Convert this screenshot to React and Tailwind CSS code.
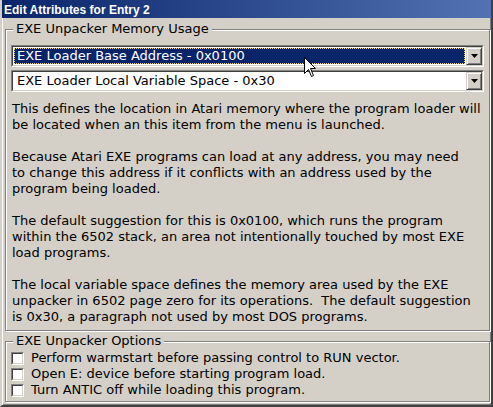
import React from "react";

const body = { fontFamily: '"DejaVu Sans", Verdana, sans-serif' };

const Sunken = ({ className = "", children }) => (
  <div className={`border border-t-[#808080] border-l-[#808080] border-r-white border-b-white ${className}`}>
    <div className="h-full border border-t-[#404040] border-l-[#404040] border-r-[#d4d0c8] border-b-[#d4d0c8] bg-white">
      {children}
    </div>
  </div>
);

const ArrowButton = () => (
  <div className="w-[16px] h-full flex items-center justify-center border border-t-[#d4d0c8] border-l-[#d4d0c8] border-r-[#404040] border-b-[#404040] bg-[#d4d0c8] shadow-[inset_1px_1px_0_#fff,inset_-1px_-1px_0_#808080]">
    <svg width="7" height="4" viewBox="0 0 7 4">
      <path d="M0 0h7L3.5 4z" fill="#000" />
    </svg>
  </div>
);

const Combo = ({ label, selected }) => (
  <Sunken className="h-[22px]">
    <div className="flex h-full">
      <div className="flex-1 p-[1px] min-w-0">
        <div
          className={`h-full flex items-center pl-[2px] text-[13px] leading-4 whitespace-nowrap ${
            selected
              ? "bg-[#0a246a] text-white border border-dotted border-[#e6d48a]"
              : "text-black border border-transparent"
          }`}
        >
          {label}
        </div>
      </div>
      <ArrowButton />
    </div>
  </Sunken>
);

const Group = ({ title, className = "", children }) => (
  <div className={`relative border border-[#808080] shadow-[inset_1px_1px_0_#fff,1px_1px_0_#fff] ${className}`}>
    <span className="absolute -top-[9px] left-[7px] px-[3px] bg-[#d4d0c8] text-[13px] leading-4 text-black">
      {title}
    </span>
    {children}
  </div>
);

const Check = ({ label }) => (
  <div className="flex items-center h-4">
    <Sunken className="w-[13px] h-[13px]" />
    <span className="ml-[7px] text-[13px] leading-4 text-black whitespace-nowrap">{label}</span>
  </div>
);

const paragraphs = [
  [
    "This defines the location in Atari memory where the program loader will",
    "be located when an this item from the menu is launched.",
  ],
  [
    "Because Atari EXE programs can load at any address, you may need",
    "to change this address if it conflicts with an address used by the",
    "program being loaded.",
  ],
  [
    "The default suggestion for this is 0x0100, which runs the program",
    "within the 6502 stack, an area not intentionally touched by most EXE",
    "load programs.",
  ],
  [
    "The local variable space defines the memory area used by the EXE",
    "unpacker in 6502 page zero for its operations.  The default suggestion",
    "is 0x30, a paragraph not used by most DOS programs.",
  ],
];

export default function App() {
  return (
    <div
      className="relative w-[493px] h-[407px] overflow-hidden bg-[#d4d0c8] border-l-2 border-r-2 border-b-2 border-l-[#d4d0c8] border-r-[#404040] border-b-[#404040] shadow-[inset_1px_0_0_#fff,inset_-1px_-1px_0_#808080]"
      style={body}
    >
      {/* title bar */}
      <div className="h-[18px] flex items-center pl-[2px] pt-[1px] bg-gradient-to-r from-[#0a246a] to-[#5272b2]">
        <span
          className="text-white font-bold text-[12px] leading-4"
          style={{ fontFamily: '"Liberation Sans", Arial, sans-serif' }}
        >
          Edit Attributes for Entry 2
        </span>
      </div>

      <div className="ml-[3px] mr-[1px]">
        <Group title="EXE Unpacker Memory Usage" className="mt-[11px] pt-[15px] px-[5px] pb-[5px]">
          <div className="flex flex-col gap-[3px]">
            <Combo label="EXE Loader Base Address - 0x0100" selected />
            <Combo label="EXE Loader Local Variable Space - 0x30" />
          </div>
          <div className="mt-[9px] pl-[1px] flex flex-col gap-4 text-[13px] leading-4 text-black">
            {paragraphs.map((lines, i) => (
              <p key={i}>
                {lines.map((l, j) => (
                  <span key={j} className="block whitespace-pre">
                    {l}
                  </span>
                ))}
              </p>
            ))}
          </div>
        </Group>

        <Group title="EXE Unpacker Options" className="mt-[10px] pt-[8px] px-[5px] pb-[3px]">
          <Check label="Perform warmstart before passing control to RUN vector." />
          <Check label="Open E: device before starting program load." />
          <Check label="Turn ANTIC off while loading this program." />
        </Group>
      </div>

      {/* mouse pointer */}
      <svg className="absolute left-[302px] top-[57px]" width="12" height="20" viewBox="0 0 12 20">
        <path
          d="M0.5 0.5V16.5L4.5 12.5L7.5 19.5L9.5 18.5L6.5 11.5H11.5Z"
          fill="#fff"
          stroke="#000"
          strokeWidth="1"
          strokeLinejoin="miter"
        />
      </svg>
    </div>
  );
}
